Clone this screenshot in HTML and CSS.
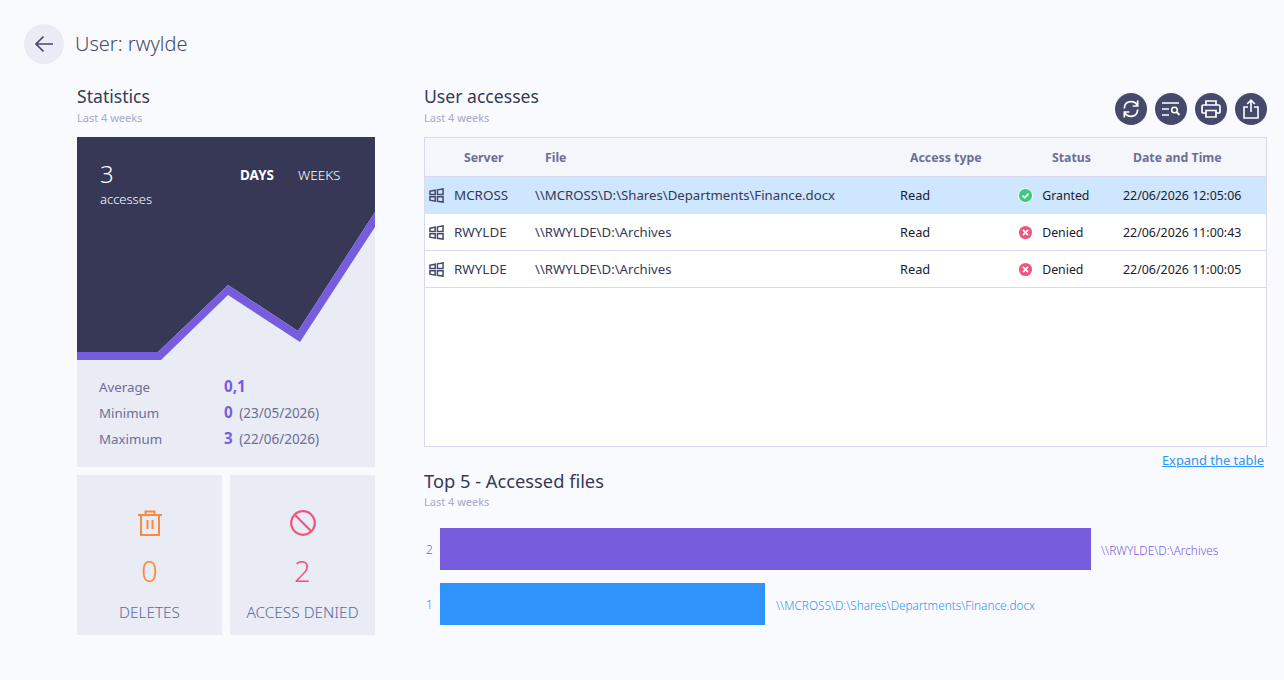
FILE: index.html
```html
<!DOCTYPE html>
<html lang="en">
<head>
    <meta charset="UTF-8">
    <meta name="viewport" content="width=device-width, initial-scale=1.0">
    <title>User: rwylde</title>
    <link rel="stylesheet" href="styles.css">
</head>
<body>
    <svg class="sprite" width="0" height="0" aria-hidden="true">
        <symbol id="win" viewBox="0 0 16 16">
            <path d="M1 3.4 6.6 2.4V7H1ZM9 2 15 1V7H9ZM1 9.4H6.6V14L1 13ZM9 9.4H15V15L9 14.2Z" fill="none" stroke="#454a6c" stroke-width="1.6"/>
        </symbol>
    </svg>

    <header class="top">
        <button class="back" aria-label="Back">
            <svg width="20" height="18" viewBox="0 0 20 18"><path d="M19 9H2M9.5 1.5 2 9l7.5 7.5" fill="none" stroke="#454a6c" stroke-width="1.7"/></svg>
        </button>
        <h1>User: rwylde</h1>
    </header>

    <main class="columns">
        <section class="col-left">
            <div class="section-head">
                <h2>Statistics</h2>
                <p>Last 4 weeks</p>
            </div>

            <div class="chart-panel">
                <div class="chart">
                    <svg width="298" height="223" viewBox="0 0 298 223">
                        <polygon points="0,0 298,0 298,75 221,194 151,148 81,215 0,215" fill="#363856"/>
                        <polygon points="0,215 81,215 151,148 221,194 298,75 298,90 223,205 151,158 84,223 0,223" fill="#775dde"/>
                    </svg>
                    <div class="chart-count">
                        <strong>3</strong>
                        <span>accesses</span>
                    </div>
                    <div class="chart-tabs">
                        <span class="active">DAYS</span>
                        <span>WEEKS</span>
                    </div>
                </div>
                <dl class="stats">
                    <dt>Average</dt><dd><b>0,1</b></dd>
                    <dt>Minimum</dt><dd><b>0</b> (23/05/2026)</dd>
                    <dt>Maximum</dt><dd><b>3</b> (22/06/2026)</dd>
                </dl>
            </div>

            <div class="cards">
                <div class="card card-orange">
                    <svg width="24" height="26" viewBox="0 0 24 26" fill="none" stroke="#f98a3f" stroke-width="2">
                        <path d="M0 5H24M3 5V25H21V5M7.5 5V1.5H16.5V5M9.5 10V19M14.5 10V19"/>
                    </svg>
                    <strong>0</strong>
                    <span>DELETES</span>
                </div>
                <div class="card card-pink">
                    <svg width="26" height="26" viewBox="0 0 26 26" fill="none" stroke="#f0557f" stroke-width="2.2">
                        <circle cx="13" cy="13" r="11.8"/>
                        <path d="M4.8 4.8 21.2 21.2"/>
                    </svg>
                    <strong>2</strong>
                    <span>ACCESS DENIED</span>
                </div>
            </div>
        </section>

        <section class="col-right">
            <div class="section-head with-tools">
                <div>
                    <h2>User accesses</h2>
                    <p>Last 4 weeks</p>
                </div>
                <div class="tools">
                    <button aria-label="Refresh">
                        <svg width="20" height="20" viewBox="0 0 20 20" fill="none" stroke="#fff" stroke-width="1.7">
                            <path d="M3.300 9.500C3.500 5.500 6 2.700 10 2.700 13 2.700 15 4 16.700 6.500M16.700 1.500V7H11.700M16.700 10.500C16.500 14.500 14 17.300 10 17.300 7 17.300 5 16 3.300 13.500M3.300 18.500V13H8.300"/>
                        </svg>
                    </button>
                    <button aria-label="Search list">
                        <svg width="20" height="16" viewBox="0 0 20 16" fill="none" stroke="#fff" stroke-width="1.6">
                            <path d="M1 2H18M1 8H8M1 14H8"/>
                            <circle cx="13.5" cy="9" r="2.8"/>
                            <path d="M15.5 11 18.5 14" stroke-width="2"/>
                        </svg>
                    </button>
                    <button aria-label="Print">
                        <svg width="20" height="18" viewBox="0 0 20 18" fill="none" stroke="#fff" stroke-width="1.7">
                            <path d="M5 5V1H15V5M5 13H2A1 1 0 0 1 1 12V6.500A1.500 1.500 0 0 1 2.500 5H17.500A1.500 1.500 0 0 1 19 6.500V12A1 1 0 0 1 18 13H15M5 10.500H15V17H5Z"/>
                        </svg>
                    </button>
                    <button aria-label="Export">
                        <svg width="16" height="20" viewBox="0 0 16 20" fill="none" stroke="#fff" stroke-width="1.6">
                            <path d="M8 13V1.500M4.200 5 8 1.200 11.800 5M5 8H1V19H15V8H11"/>
                        </svg>
                    </button>
                </div>
            </div>

            <div class="table-box">
                <table>
                    <colgroup>
                        <col class="c-server"><col class="c-file"><col class="c-type"><col class="c-status"><col>
                    </colgroup>
                    <thead>
                        <tr>
                            <th class="th-server">Server</th>
                            <th>File</th>
                            <th>Access type</th>
                            <th class="th-status">Status</th>
                            <th>Date and Time</th>
                        </tr>
                    </thead>
                    <tbody>
                        <tr class="selected">
                            <td class="td-server"><svg width="15" height="15"><use href="#win"/></svg>MCROSS</td>
                            <td class="td-file">\\MCROSS\D:\Shares\Departments\Finance.docx</td>
                            <td>Read</td>
                            <td class="td-status">
                                <svg width="15" height="15" viewBox="0 0 16 16"><circle cx="8" cy="8" r="7.500" fill="#3ec983" stroke="#fff" stroke-width="1"/><path d="M4.800 8.200 7.100 10.400 11.200 6" fill="none" stroke="#fff" stroke-width="1.700"/></svg>
                                Granted
                            </td>
                            <td class="td-date">22/06/2026 12:05:06</td>
                        </tr>
                        <tr>
                            <td class="td-server"><svg width="15" height="15"><use href="#win"/></svg>RWYLDE</td>
                            <td class="td-file">\\RWYLDE\D:\Archives</td>
                            <td>Read</td>
                            <td class="td-status">
                                <svg width="15" height="15" viewBox="0 0 16 16"><circle cx="8" cy="8" r="7" fill="#f0557f"/><path d="M5.300 5.300 10.700 10.700M10.700 5.300 5.300 10.700" fill="none" stroke="#fff" stroke-width="1.900"/></svg>
                                Denied
                            </td>
                            <td class="td-date">22/06/2026 11:00:43</td>
                        </tr>
                        <tr>
                            <td class="td-server"><svg width="15" height="15"><use href="#win"/></svg>RWYLDE</td>
                            <td class="td-file">\\RWYLDE\D:\Archives</td>
                            <td>Read</td>
                            <td class="td-status">
                                <svg width="15" height="15" viewBox="0 0 16 16"><circle cx="8" cy="8" r="7" fill="#f0557f"/><path d="M5.300 5.300 10.700 10.700M10.700 5.300 5.300 10.700" fill="none" stroke="#fff" stroke-width="1.900"/></svg>
                                Denied
                            </td>
                            <td class="td-date">22/06/2026 11:00:05</td>
                        </tr>
                    </tbody>
                </table>
            </div>
            <div class="expand"><a href="#">Expand the table</a></div>

            <div class="section-head top5">
                <h2>Top 5 - Accessed files</h2>
                <p>Last 4 weeks</p>
            </div>
            <div class="bars">
                <div class="bar-row bar-purple">
                    <span class="bar-num">2</span>
                    <div class="bar" style="width: 651px"></div>
                    <span class="bar-label">\\RWYLDE\D:\Archives</span>
                </div>
                <div class="bar-row bar-blue">
                    <span class="bar-num">1</span>
                    <div class="bar" style="width: 325px"></div>
                    <span class="bar-label">\\MCROSS\D:\Shares\Departments\Finance.docx</span>
                </div>
            </div>
        </section>
    </main>
</body>
</html>
```

FILE: styles.css
```css
/* General */
body {
    font-family: 'Noto Sans', 'Open Sans', sans-serif;
    background: #f9fafd;
    color: #363856;
    margin: 0;
    height: 680px;
    overflow: hidden;
}

.sprite {
    position: absolute;
}

button {
    border: none;
    padding: 0;
    cursor: pointer;
}

.top {
    display: flex;
    align-items: center;
    gap: 11px;
    height: 40px;
    padding: 24px 0 0 24px;
}

.back {
    width: 40px;
    height: 40px;
    border-radius: 50%;
    background: #e9ebf5;
    display: flex;
    align-items: center;
    justify-content: center;
}

h1 {
    margin: 0 0 2px;
    font-size: 20px;
    font-weight: 300;
    color: #454a6c;
}

.columns {
    display: flex;
    gap: 49px;
    margin-top: 20px;
    padding-left: 77px;
}

.col-left {
    width: 298px;
}

.col-right {
    width: 843px;
}

.section-head {
    height: 53px;
}

.section-head h2 {
    margin: 0;
    font-size: 17.6px;
    line-height: 24px;
    font-weight: 400;
    color: #363856;
}

.section-head p {
    margin: 2px 0 0;
    font-size: 11px;
    line-height: 16px;
    color: #a6a8cf;
}

.top5 h2 {
    padding-top: 1px;
    font-size: 18.3px;
}

.top5 p {
    margin-top: 1px;
}

.with-tools {
    display: flex;
    justify-content: space-between;
}

.tools {
    display: flex;
    gap: 8px;
    padding-top: 9px;
}

.tools button {
    width: 32px;
    height: 32px;
    border-radius: 50%;
    background: #454a6c;
    display: flex;
    align-items: center;
    justify-content: center;
}

/* Chart panel */
.chart-panel {
    background: #e9ebf5;
    height: 330px;
}

.chart {
    position: relative;
    height: 223px;
}

.chart svg {
    display: block;
}

.chart-count {
    position: absolute;
    left: 23px;
    top: 22px;
    color: #fff;
}

.chart-count strong {
    display: block;
    font-size: 24px;
    line-height: 30px;
    font-weight: 300;
}

.chart-count span {
    display: block;
    font-size: 13px;
    line-height: 20px;
    font-weight: 300;
}

.chart-tabs {
    position: absolute;
    left: 163px;
    top: 28px;
    display: flex;
    gap: 24px;
    font-size: 13.5px;
    line-height: 20px;
    font-weight: 300;
    color: #fff;
}

.chart-tabs .active {
    font-weight: 700;
}

.stats {
    display: grid;
    grid-template-columns: 125px 1fr;
    grid-auto-rows: 26px;
    margin: 0;
    padding: 14px 0 0 22px;
    font-size: 13.3px;
    line-height: 26px;
    color: #6c6f96;
}

.stats dd {
    margin: 0;
    font-size: 13.5px;
}

.stats b {
    font-size: 15.2px;
    line-height: 1;
    color: #775dde;
    margin-right: 3px;
}

/* Cards */
.cards {
    display: flex;
    gap: 8px;
    margin-top: 8px;
}

.card {
    width: 145px;
    height: 160px;
    background: #e9ebf5;
    display: flex;
    flex-direction: column;
    align-items: center;
    padding-top: 35px;
    box-sizing: border-box;
}

.card strong {
    font-size: 29px;
    line-height: 38px;
    font-weight: 300;
    margin-top: 16px;
}

.card span {
    font-size: 15.4px;
    line-height: 20px;
    font-weight: 300;
    color: #5b6a9c;
    margin-top: 13px;
}

.card-orange strong {
    color: #f98a3f;
}

.card-pink strong {
    color: #f0557f;
}

/* Table */
.table-box {
    height: 310px;
    box-sizing: border-box;
    background: #fff;
    border: 1px solid #d8dbef;
}

table {
    width: 100%;
    border-collapse: collapse;
    table-layout: fixed;
    font-size: 12.8px;
}

.c-server {
    width: 100px;
}

.c-file {
    width: 365px;
}

.c-type {
    width: 118px;
}

.c-status {
    width: 105px;
}

th {
    height: 38px;
    padding: 0 0 0 20px;
    text-align: left;
    font-weight: 700;
    font-size: 12.3px;
    color: #6c6f96;
    background: #f5f6fb;
    border-bottom: 1px solid #d8dbef;
}

.th-server {
    padding-left: 39px;
}

.th-status {
    padding-left: 44px;
}

td {
    height: 36px;
    padding: 0 0 0 10px;
    color: #1a1b2e;
    border-bottom: 1px solid #d8dbef;
    white-space: nowrap;
}

.td-server {
    padding-left: 4px;
    font-size: 13.4px;
    color: #363856;
}

.td-file {
    font-size: 13.2px;
    color: #363856;
}

.td-status {
    font-size: 12.3px;
}

.td-date {
    font-size: 12.4px;
}

td svg {
    vertical-align: -3px;
}

.td-server svg {
    margin-right: 10px;
}

.td-status svg {
    margin-right: 6px;
}

.selected td {
    background: #cfe6ff;
    border-bottom-color: #cfe6ff;
}

.expand {
    height: 21px;
    padding: 4px 3px 0 0;
    box-sizing: border-box;
    text-align: right;
    font-size: 12.9px;
    line-height: 18px;
}

.expand a {
    color: #2e93fb;
}

/* Bars */
.bars {
    display: flex;
    flex-direction: column;
    gap: 13px;
    margin-top: 7px;
}

.bar-row {
    display: flex;
    align-items: center;
    height: 42px;
    font-size: 11.8px;
    font-weight: 300;
}

.bar-num {
    width: 14px;
    padding-left: 2px;
}

.bar {
    height: 42px;
    margin-right: 10px;
}

.bar-label {
    padding-top: 2px;
}

.bar-purple {
    color: #775dde;
}

.bar-purple .bar {
    background: #775dde;
}

.bar-blue {
    color: #2e93fb;
}

.bar-blue .bar {
    background: #2e93fb;
}

.bar-blue .bar-label {
    margin-left: 1px;
}
```
